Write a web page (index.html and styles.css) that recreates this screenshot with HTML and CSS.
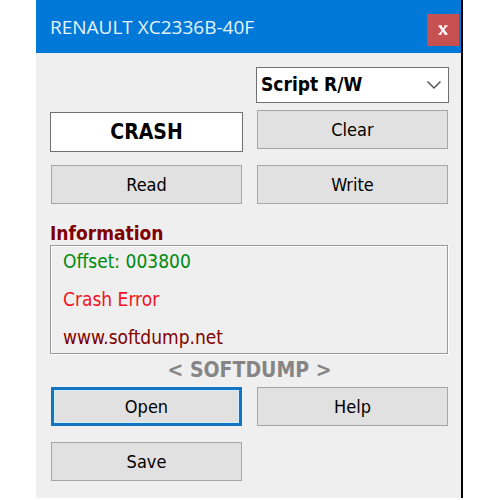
FILE: index.html
```
<!DOCTYPE html>
<html lang="en">
<head>
    <meta charset="UTF-8">
    <title>RENAULT XC2336B-40F</title>
    <link rel="stylesheet" href="styles.css">
</head>
<body>
    <div class="window">
        <header class="title-bar">
            <h1>RENAULT XC2336B-40F</h1>
            <button type="button" class="close" aria-label="Close">
                <svg width="10" height="10" viewBox="0 0 10 10">
                    <path d="M0.5 1h3M6.5 1h3M0.5 9h3M6.5 9h3" stroke="#fff" stroke-width="1.5"/>
                    <path d="M2 1l6 8" stroke="#fff" stroke-width="2.6"/>
                    <path d="M8 1L2 9" stroke="#fff" stroke-width="1.6"/>
                </svg>
            </button>
        </header>

        <main class="content">
            <div class="select-row">
                <div class="select-box">
                    <select id="modeSelect" aria-label="Mode">
                        <option>Script R/W</option>
                    </select>
                    <svg class="arrow" width="16" height="10" viewBox="0 0 16 10">
                        <path d="M1.5 1.5L8 8l6.5-6.5" fill="none" stroke="#555" stroke-width="1.5"/>
                    </svg>
                </div>
            </div>

            <div class="row">
                <input type="text" class="crash-input" aria-label="Data type" value="CRASH">
                <button type="button" class="btn">Clear</button>
            </div>

            <div class="row">
                <button type="button" class="btn">Read</button>
                <button type="button" class="btn">Write</button>
            </div>

            <section class="info">
                <h2>Information</h2>
                <div class="info-box">
                    <p class="offset">Offset: 003800</p>
                    <p class="error">Crash Error</p>
                    <p class="site">www.softdump.net</p>
                </div>
            </section>

            <p class="brand">&lt; SOFTDUMP &gt;</p>

            <div class="row files">
                <button type="button" class="btn default">Open</button>
                <button type="button" class="btn">Help</button>
                <button type="button" class="btn">Save</button>
            </div>
        </main>
    </div>
</body>
</html>
```

FILE: styles.css
```
* {
    box-sizing: border-box;
}
body {
    margin: 0 37px 0 36px;
    background-color: #fff;
    font-family: "DejaVu Sans Condensed", "Noto Sans", sans-serif;
    font-size: 19px;
    color: #000;
}
h1, h2, p {
    margin: 0;
}
.window {
    background-color: #efefef;
    border-right: 2px solid #000;
}

/* title bar */
.title-bar {
    display: flex;
    align-items: flex-start;
    justify-content: space-between;
    height: 53px;
    padding: 14px 2px 0 14px;
    background-color: #0078d7;
}
.title-bar h1 {
    font-family: "Open Sans", sans-serif;
    font-size: 19px;
    font-weight: normal;
    line-height: 26px;
    color: #e6f4ff;
}
.close {
    display: flex;
    align-items: center;
    justify-content: center;
    width: 32px;
    height: 32px;
    padding: 0;
    border: none;
    background-color: #c75050;
}

/* form */
.content {
    padding: 14px 12px 17px 14px;
}
.row,
.select-row {
    display: grid;
    grid-template-columns: 1fr 1fr;
    column-gap: 13px;
    align-items: start;
}
.row {
    margin-bottom: 13px;
}
.select-row {
    margin-bottom: 7px;
}
.select-box {
    position: relative;
    grid-column: 2;
}
.select-box select {
    display: block;
    width: 100%;
    height: 36px;
    padding: 0 30px 2px 4px;
    border: 1px solid #707070;
    border-radius: 0;
    background-color: #fff;
    color: #000;
    font: inherit;
    font-weight: bold;
    appearance: none;
}
.arrow {
    position: absolute;
    right: 7px;
    top: 13px;
    pointer-events: none;
}
.crash-input {
    width: 100%;
    height: 40px;
    margin-top: 2px;
    padding: 0;
    border: 1px solid #707070;
    background-color: #fff;
    color: #000;
    font: inherit;
    font-size: 21px;
    font-weight: bold;
    text-align: center;
}
.btn {
    height: 39px;
    margin: 0 1px;
    padding: 0;
    border: 1px solid #a6a6a6;
    background-color: #e1e1e1;
    color: #000;
    font: inherit;
    font-size: 18px;
}
.btn.default {
    border: 3px solid #1474c4;
    box-shadow: inset 0 0 0 1px #d3effc;
}

/* information panel */
.info h2 {
    padding-top: 4px;
    font-size: 19px;
    line-height: 24px;
    color: #800000;
}
.info-box {
    display: flex;
    flex-direction: column;
    gap: 14px;
    padding: 3px 12px 4px;
    margin-right: 1px;
    border: 1px solid #999;
    box-shadow: inset 1px 1px #fff, 1px 1px #fff;
    line-height: 24px;
}
.offset {
    color: #008a10;
}
.error {
    color: #f0141e;
}
.site {
    color: #800000;
}
.brand {
    padding: 4px 0 5px;
    font-size: 21px;
    font-weight: bold;
    line-height: 24px;
    text-align: center;
    color: #858585;
}
.files {
    row-gap: 16px;
    margin-bottom: 0;
}
```
